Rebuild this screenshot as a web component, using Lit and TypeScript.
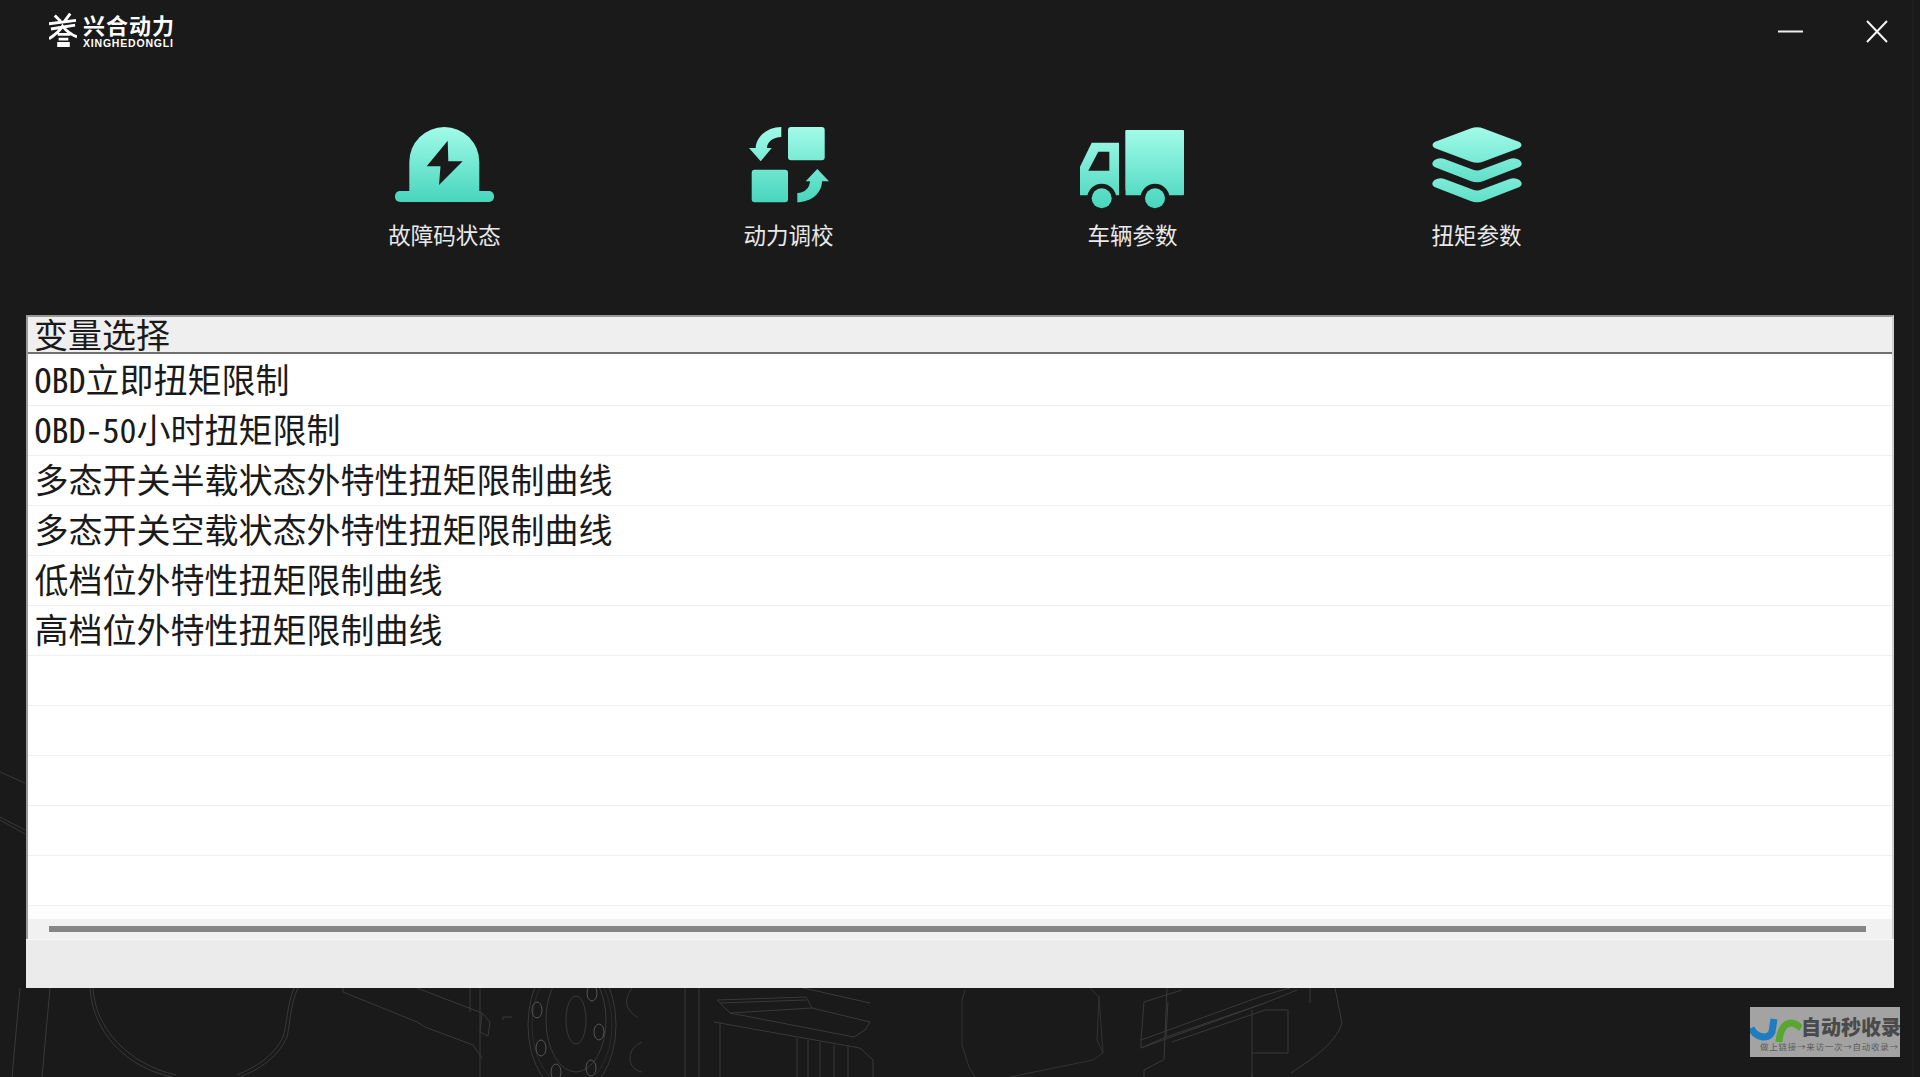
import { LitElement, html, css, svg } from "lit";
import { customElement } from "lit/decorators.js";

const ROWS = [
  "OBD立即扭矩限制",
  "OBD-50小时扭矩限制",
  "多态开关半载状态外特性扭矩限制曲线",
  "多态开关空载状态外特性扭矩限制曲线",
  "低档位外特性扭矩限制曲线",
  "高档位外特性扭矩限制曲线",
  "", "", "", "", "",
];

const grad = (id: string, h: number) => svg`<defs><linearGradient id=${id} gradientUnits="userSpaceOnUse" x1="0" y1="0" x2="0" y2=${h}><stop offset="0" stop-color="#a2fbe9"/><stop offset="1" stop-color="#47d5bc"/></linearGradient></defs>`;

const NAV = [
  {
    label: "故障码状态", w: 99, h: 75,
    art: svg`${grad("g1", 75)}<g fill="url(#g1)"><path d="M14.3 65V35A35 35 0 0 1 84.3 35V65Z"/><rect x="0" y="64" width="99" height="11" rx="5"/></g><path fill="#1a1a1a" d="M52.7 13.7 31.7 39.3H45.5L44 58 67.7 34.3H53.3Z"/>`,
  },
  {
    label: "动力调校", w: 80, h: 76,
    art: svg`${grad("g2", 76)}<g fill="url(#g2)"><rect x="39" y="0" width="36.7" height="33.3" rx="3"/><rect x="2.7" y="42.7" width="36.3" height="32.6" rx="3"/><path d="M32.3 0V10C24 10 18 15 18 21H22.7L11.7 34.3 0 21H6.7C7 10 18 0 32.3 0Z"/><path d="M48.3 75.3V66C56 66 60.5 61 61 54.3H56.7L68.3 42 80 54.3H73C73 66 62 75.3 48.3 75.3Z"/></g>`,
  },
  {
    label: "车辆参数", w: 104, h: 82,
    art: svg`<g transform="translate(-1 3)">${grad("g3", 79)}<g fill="url(#g3)"><path d="M46.5 0H103A1 1 0 0 1 104 1V64.3A1 1 0 0 1 103 65.3H45.3V1.2A1.2 1.2 0 0 1 46.5 0Z"/><path d="M11.7 12.7H39V65.3H0V36.7Z"/></g><path fill="#1a1a1a" d="M18.3 21.7H29.3V40.7H8.3Z"/><circle cx="21.7" cy="68.3" r="14.5" fill="#1a1a1a"/><circle cx="75" cy="68.3" r="14.5" fill="#1a1a1a"/><rect x="39" y="60" width="6.3" height="10" fill="#1a1a1a"/><g fill="url(#g3)"><circle cx="21.7" cy="68.3" r="10"/><circle cx="75" cy="68.3" r="10"/></g></g>`,
  },
  {
    label: "扭矩参数", w: 90, h: 76,
    art: svg`${grad("g4", 76)}<g fill="url(#g4)" transform="translate(0.5 0)"><path d="M38 1.5Q44.7-1 51 1.5L87 15Q91 18 87 21L51 34.5Q44.7 37 38 34.5L2 21Q-2 18 2 15Z"/><path d="M2 33Q7 30 12 32L40 42.5Q44.7 44.5 49 42.5L77 32Q82 30 87 33Q91.5 37 87 40L51 54Q44.7 56.5 38 54L2 40Q-2.5 37 2 33Z"/><path transform="translate(0 20)" d="M2 33Q7 30 12 32L40 42.5Q44.7 44.5 49 42.5L77 32Q82 30 87 33Q91.5 37 87 40L51 54Q44.7 56.5 38 54L2 40Q-2.5 37 2 33Z"/></g>`,
  },
];

@customElement("app-root")
export class AppRoot extends LitElement {
  static styles = css`
    :host {
      display: block;
      font-family: "Noto Sans CJK SC", "Liberation Sans", sans-serif;
    }
    .page {
      position: relative;
      width: 1920px;
      height: 1077px;
      background: #1a1a1a;
      overflow: hidden;
      display: flex;
      flex-direction: column;
    }
    .art {
      position: absolute;
      inset: 0;
      fill: none;
      stroke: #393939;
      stroke-width: 1;
    }
    .head {
      position: relative;
      height: 127px;
      flex: none;
      display: flex;
      justify-content: space-between;
      align-items: flex-start;
    }
    .brand {
      display: flex;
      gap: 6px;
      margin: 13px 0 0 49px;
      color: #fff;
    }
    .brand-text {
      display: flex;
      flex-direction: column;
    }
    .brand-cn {
      font-size: 22px;
      line-height: 23px;
      font-weight: 700;
      letter-spacing: 1px;
    }
    .brand-en {
      margin-top: 2px;
      font-family: "Liberation Sans", sans-serif;
      font-size: 10.5px;
      line-height: 10px;
      font-weight: 700;
      letter-spacing: 0.8px;
      white-space: nowrap;
    }
    .controls {
      display: flex;
      gap: 62px;
      margin: 20px 32px 0 0;
    }
    .nav {
      position: relative;
      flex: none;
      height: 188px;
      padding-left: 272.5px;
      display: grid;
      grid-template-columns: repeat(4, 344px);
      justify-content: start;
      align-items: start;
    }
    .nav-item {
      display: flex;
      flex-direction: column;
      align-items: center;
    }
    .nav-icon {
      height: 82px;
      display: block;
    }
    .nav-label {
      margin-top: 9px;
      font-size: 22.5px;
      line-height: 32px;
      color: #e9e9e9;
    }
    .panel {
      position: relative;
      margin-left: 26px;
      width: 1868px;
      display: flex;
      flex-direction: column;
      color: #1a1a1a;
      font-family: "Noto Sans Mono CJK SC", "Noto Sans CJK SC", monospace;
      font-size: 34px;
    }
    .table {
      height: 624px;
      box-sizing: border-box;
      display: flex;
      flex-direction: column;
      background: #fdfdfd;
      border-top: 2px solid #9a9a9a;
      border-left: 2px solid #9a9a9a;
      border-right: 2px solid #d0d0d0;
    }
    .th {
      height: 37px;
      flex: none;
      box-sizing: border-box;
      margin-bottom: 2px;
      padding: 0 0 2px 6px;
      display: flex;
      align-items: center;
      background: #efefef;
      border-bottom: 2px solid #707070;
      line-height: 33px;
      white-space: nowrap;
    }
    .tr {
      height: 50px;
      flex: none;
      box-sizing: border-box;
      padding: 0 0 4px 6.5px;
      display: flex;
      align-items: center;
      background: #fff;
      border-bottom: 1px solid #efefef;
      white-space: nowrap;
      line-height: 45px;
    }
    .spacer {
      flex: 1;
    }
    .scroll {
      height: 20px;
      flex: none;
      box-sizing: border-box;
      padding: 7px 26px 7px 21px;
      background: #f1f1f1;
    }
    .thumb {
      height: 6px;
      background: #858585;
    }
    .foot {
      height: 49px;
      background: #ebebeb;
      border-top: 1px solid #f8f8f8;
      box-sizing: border-box;
    }
    .mark {
      position: absolute;
      left: 1750px;
      top: 1007px;
      width: 150px;
      height: 50px;
      background: #a3a3a3;
      overflow: hidden;
      font-family: "Noto Sans CJK SC", sans-serif;
    }
    .mark svg {
      position: absolute;
      left: 0;
      top: 11px;
    }
    .mark-title {
      position: absolute;
      left: 51px;
      top: 8px;
      font-size: 20px;
      line-height: 24px;
      font-weight: 900;
      color: #4a4a4a;
      white-space: nowrap;
    }
    .mark-sub {
      position: absolute;
      left: 10px;
      top: 33px;
      font-size: 8.5px;
      line-height: 12px;
      letter-spacing: 0.75px;
      color: #5c5c5c;
      white-space: nowrap;
    }
  `;

  private art() {
    return svg`<svg class="art" width="1920" height="1077" viewBox="0 0 1920 1077">
      <path d="M0 772 25 783M0 817 25 830M0 820 25 834"/>
      <path d="M1913 0V1077" stroke="#222"/>
      <path d="M50 988 42 1077M90 988C92 1030 125 1068 173 1077M93 988C95 1028 128 1064 176 1075M298 988C290 1005 290 1025 287 1037 278 1058 258 1070 240 1077M294 988C287 1005 287 1025 283 1037 274 1056 256 1067 237 1075"/>
      <path d="M343 988V992L417 1022 425 1027 473 1045 482 1058M417 988 482 1013M470 988V1012M480 988V1077M482 1013 490 1022 488 1036 480 1032ZM20 988 12 1077"/>
      <ellipse cx="576" cy="1020" rx="10" ry="24"/><ellipse cx="576" cy="1020" rx="30" ry="52"/><ellipse cx="572" cy="1025" rx="44" ry="70"/><ellipse cx="572" cy="1025" rx="40" ry="62" stroke="#2c2c2c"/>
      <g stroke="#565656"><ellipse cx="537" cy="1010" rx="5" ry="8"/><ellipse cx="592" cy="993" rx="5" ry="8"/><ellipse cx="599" cy="1032" rx="5" ry="8"/><ellipse cx="541" cy="1048" rx="5" ry="8"/><ellipse cx="591" cy="1068" rx="5" ry="8"/><ellipse cx="556" cy="1072" rx="5" ry="8"/></g>
      <path d="M512 1017H503V1020M632 988C624 1000 624 1008 638 1018M642 1042C624 1050 628 1070 642 1072M685 988V1077M699 988V1077"/>
      <path d="M717 1000 806 997 812 1008 870 1022 865 1030 854 1037 730 1013 717 1000ZM720 1003 806 1000M730 1013 812 1008M714 1022 860 1048 873 1060V1077M803 988 870 1003M797 1038V1077M808 1040V1077M820 1042V1077M834 1045V1077M848 1046V1077M720 1022V1077"/>
      <path d="M965 990 962 1000V1045L969 1067 975 1077M1090 988 1099 997 1103 1053 1093 1060 1010 1077M1099 997 1097 1040 1103 1053" stroke="#333"/>
      <path d="M1182 990 1144 1002 1141 1040V1048L1166 1037 1168 1002M1141 1048 1265 1003 1297 990M1141 1040 1265 995 1290 988M1166 1037 1265 1003M1172 1042 1265 1010 1288 1010V1053M1252 1010V1053 1205 1073M1252 1053 1288 1053M1163 1060 1144 1070V1077M1167 988 1164 1060M1335 988 1342 1023C1335 1045 1310 1060 1291 1073M1310 988V1003"/>
    </svg>`;
  }

  render() {
    return html`
      <div class="page">
        ${this.art()}
        <div class="head">
          <div class="brand">
            <svg width="28" height="34" viewBox="0 0 29 34" fill="none" stroke="#fff" stroke-width="3">
              <path d="M6 2 12 8M22 0 16 8M0 10.5 28 7M2 16 27 12M0 26C6 22 11 18 14 13 18 18 23 22 29 24M9 21.5H22M10 26.5H20M10 31H20V34H10Z"/>
            </svg>
            <div class="brand-text">
              <div class="brand-cn">兴合动力</div>
              <div class="brand-en">XINGHEDONGLI</div>
            </div>
          </div>
          <div class="controls">
            <svg width="26" height="24" viewBox="0 0 26 24"><rect x="0" y="10.5" width="25" height="2" fill="#eee"/></svg>
            <svg width="22" height="24" viewBox="0 0 22 24" stroke="#f4f4f4" stroke-width="2"><path d="M1 1 21 22M21 1 1 22"/></svg>
          </div>
        </div>
        <div class="nav">
          ${NAV.map(
            (n) => html`<div class="nav-item">
              <div class="nav-icon">
                <svg width=${n.w} height=${n.h} viewBox="0 0 ${n.w} ${n.h}" style="overflow:visible">${n.art}</svg>
              </div>
              <div class="nav-label">${n.label}</div>
            </div>`
          )}
        </div>
        <div class="panel">
          <div class="table">
            <div class="th">变量选择</div>
            ${ROWS.map((r) => html`<div class="tr">${r}</div>`)}
            <div class="spacer"></div>
            <div class="scroll"><div class="thumb"></div></div>
          </div>
          <div class="foot"></div>
        </div>
        <div class="mark">
          <svg width="52" height="26" viewBox="0 0 52 26" fill="none" stroke-width="7">
            <path d="M1 10C6 20 18 22 22 14L24 1" stroke="#1f7cc0"/>
            <path d="M29 24C30 10 36 5 41 5 46 5 48 8 51 10" stroke="#58a731"/>
          </svg>
          <div class="mark-title">自动秒收录</div>
          <div class="mark-sub">做上链接→来访一次→自动收录→</div>
        </div>
      </div>
    `;
  }
}
